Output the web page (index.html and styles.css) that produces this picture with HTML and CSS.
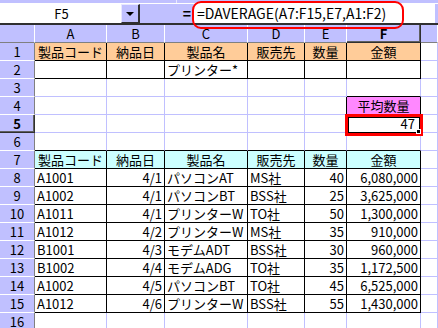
FILE: index.html
```html
<!DOCTYPE html>
<html lang="ja">
<head>
<meta charset="utf-8">
<link rel="stylesheet" href="styles.css">
</head>
<body>
<div class="app">
  <div class="toolbar"><span class="tb-sep"></span></div>
  <div class="fbar">
    <div class="namebox">F5</div>
    <div class="ddbtn"><span class="tri"></span></div>
    <div class="eq">=</div>
    <div class="fx">=DAVERAGE(A7:F15,E7,A1:F2)</div>
  </div>
  <div class="sheet">
    <div class="corner"></div><div class="hc">A</div><div class="hc">B</div><div class="hc">C</div><div class="hc">D</div><div class="hc">E</div><div class="hc hsel">F</div><div class="hc"></div>

    <div class="rh">1</div><div class="c or bk ctr">製品コード</div><div class="c or bk ctr">納品日</div><div class="c or bk ctr">製品名</div><div class="c or bk ctr">販売先</div><div class="c or bk ctr">数量</div><div class="c or bk ctr">金額</div><div class="c"></div>
    <div class="rh">2</div><div class="c bk"></div><div class="c bk"></div><div class="c bk">プリンター*</div><div class="c bk"></div><div class="c bk"></div><div class="c bk"></div><div class="c"></div>
    <div class="rh">3</div><div class="c"></div><div class="c"></div><div class="c"></div><div class="c"></div><div class="c"></div><div class="c bkb"></div><div class="c"></div>
    <div class="rh">4</div><div class="c"></div><div class="c"></div><div class="c"></div><div class="c"></div><div class="c bkr"></div><div class="c pk bk ctr">平均数量</div><div class="c"></div>
    <div class="rh rsel">5</div><div class="c"></div><div class="c"></div><div class="c"></div><div class="c"></div><div class="c"></div><div class="c r active">47</div><div class="c"></div>
    <div class="rh">6</div><div class="c bkb"></div><div class="c bkb"></div><div class="c bkb"></div><div class="c bkb"></div><div class="c bkb"></div><div class="c bkb"></div><div class="c"></div>

    <div class="rh">7</div><div class="c cy bk ctr">製品コード</div><div class="c cy bk ctr">納品日</div><div class="c cy bk ctr">製品名</div><div class="c cy bk ctr">販売先</div><div class="c cy bk ctr">数量</div><div class="c cy bk ctr">金額</div><div class="c"></div>
    <div class="rh">8</div><div class="c bk">A1001</div><div class="c bk r">4/1</div><div class="c bk">パソコンAT</div><div class="c bk">MS社</div><div class="c bk r">40</div><div class="c bk r">6,080,000</div><div class="c"></div>
    <div class="rh">9</div><div class="c bk">A1002</div><div class="c bk r">4/1</div><div class="c bk">パソコンBT</div><div class="c bk">BSS社</div><div class="c bk r">25</div><div class="c bk r">3,625,000</div><div class="c"></div>
    <div class="rh">10</div><div class="c bk">A1011</div><div class="c bk r">4/1</div><div class="c bk">プリンターW</div><div class="c bk">TO社</div><div class="c bk r">50</div><div class="c bk r">1,300,000</div><div class="c"></div>
    <div class="rh">11</div><div class="c bk">A1012</div><div class="c bk r">4/2</div><div class="c bk">プリンターW</div><div class="c bk">MS社</div><div class="c bk r">35</div><div class="c bk r">910,000</div><div class="c"></div>
    <div class="rh">12</div><div class="c bk">B1001</div><div class="c bk r">4/3</div><div class="c bk">モデムADT</div><div class="c bk">BSS社</div><div class="c bk r">30</div><div class="c bk r">960,000</div><div class="c"></div>
    <div class="rh">13</div><div class="c bk">B1002</div><div class="c bk r">4/4</div><div class="c bk">モデムADG</div><div class="c bk">TO社</div><div class="c bk r">35</div><div class="c bk r">1,172,500</div><div class="c"></div>
    <div class="rh">14</div><div class="c bk">A1002</div><div class="c bk r">4/5</div><div class="c bk">パソコンBT</div><div class="c bk">TO社</div><div class="c bk r">45</div><div class="c bk r">6,525,000</div><div class="c"></div>
    <div class="rh">15</div><div class="c bk">A1012</div><div class="c bk r">4/6</div><div class="c bk">プリンターW</div><div class="c bk">BSS社</div><div class="c bk r">55</div><div class="c bk r">1,430,000</div><div class="c"></div>
    <div class="rh">16</div><div class="c"></div><div class="c"></div><div class="c"></div><div class="c"></div><div class="c"></div><div class="c"></div><div class="c"></div>

    <div class="selbox"><span class="handle"></span></div>
  </div>
  <div class="fx-ring"></div>
</div>
</body>
</html>
```

FILE: styles.css
```css
* { box-sizing: border-box; }
html, body { margin: 0; padding: 0; }
body {
  width: 438px;
  height: 328px;
  overflow: hidden;
  background: #ffffff;
  font-family: "Noto Sans CJK JP", "Noto Sans", sans-serif;
  font-size: 13px;
  color: #000;
}
.app {
  position: relative;
  width: 438px;
  height: 328px;
  overflow: hidden;
}
.toolbar {
  height: 4px;
  background: #c0c0ff;
  border-bottom: 1px solid #ffffff;
  position: relative;
}
.tb-sep {
  position: absolute;
  left: 176px;
  top: 0;
  width: 1px;
  height: 3px;
  background: #e8e8ff;
}
.fbar {
  display: flex;
  height: 21px;
  background: #c0c0ff;
  border-bottom: 2px solid #303030;
}
.namebox {
  width: 121px;
  height: 19px;
  background: #fff;
  text-align: center;
  line-height: 19px;
  font-size: 13px;
  padding-left: 2px;
}
.ddbtn {
  width: 19px;
  height: 19px;
  background: #c0c0ff;
  border-top: 1px solid #e8e8ff;
  border-left: 1px solid #e8e8ff;
  border-right: 2px solid #303030;
  border-bottom: 1px solid #303030;
  display: flex;
  align-items: center;
  justify-content: center;
}
.tri {
  width: 0;
  height: 0;
  border-left: 4px solid transparent;
  border-right: 4px solid transparent;
  border-top: 4px solid #000;
}
.eq {
  width: 54px;
  text-align: right;
  padding-right: 3px;
  font-weight: bold;
  font-size: 14px;
  line-height: 19px;
}
.fx {
  flex: 1;
  height: 19px;
  background: #fff;
  margin-right: 3px;
  padding-left: 3px;
  font-size: 14px;
  line-height: 19px;
  white-space: nowrap;
}
.fx-ring {
  position: absolute;
  left: 192px;
  top: 1px;
  width: 212px;
  height: 28px;
  border: 2px solid #ff0000;
  border-radius: 9px;
}
.sheet {
  position: relative;
  display: grid;
  grid-template-columns: 35px 72px 58px 83px 57px 42px 74px 1fr;
  grid-auto-rows: 18px;
}
.corner, .hc, .rh {
  background: #c0c0ff;
  text-align: center;
  line-height: 17px;
  font-size: 13px;
}
.corner {
  border-right: 1px solid #ffffff;
  border-bottom: 1px solid #808080;
}
.hc {
  border-right: 1px solid #ffffff;
  border-bottom: 1px solid #808080;
}
.hsel {
  font-weight: bold;
  border-right: 1px solid #303030;
  border-bottom: 1px solid #303030;
  box-shadow: inset -1px -1px 0 #606060;
}
.rh {
  border-bottom: 1px solid #ffffff;
  border-right: 1px solid #808080;
}
.rsel {
  font-weight: bold;
  border-bottom: 1px solid #303030;
  border-right: 1px solid #303030;
  box-shadow: inset -1px -1px 0 #606060;
}
.c {
  background: #fff;
  border-right: 1px solid #c0c0ff;
  border-bottom: 1px solid #c0c0ff;
  padding: 0 2px 0 2px;
  line-height: 17px;
  white-space: nowrap;
  overflow: hidden;
}
.ctr { text-align: center; }
.r { text-align: right; }
.or { background: #ffcc99; }
.cy { background: #ccffff; }
.pk { background: #ff88ff; }
.bk {
  border-right-color: #000;
  border-bottom-color: #000;
}
.bkr { border-right-color: #000; }
.bkb { border-bottom-color: #000; }
.active { padding-right: 5px; }
.selbox {
  position: absolute;
  left: 345px;
  top: 89px;
  width: 78px;
  height: 22px;
  border: 3px solid #ff0000;
  pointer-events: none;
}
.selbox::before {
  content: "";
  position: absolute;
  left: 0;
  top: 0;
  right: 0;
  bottom: 0;
  border: 1px solid #000;
}
.handle {
  position: absolute;
  right: -1px;
  bottom: -1px;
  width: 5px;
  height: 5px;
  background: #000;
  border: 1px solid #fff;
}
```
